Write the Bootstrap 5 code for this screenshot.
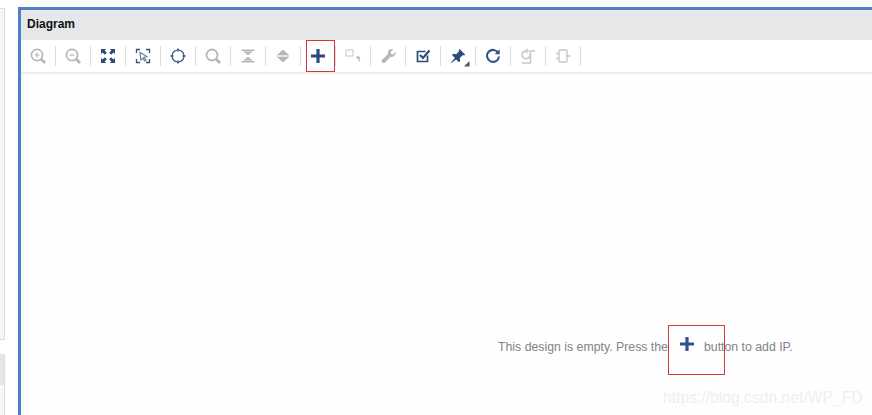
<!DOCTYPE html>
<html lang="en">
<head>
<meta charset="utf-8">
<title>Diagram</title>
<link rel="stylesheet" href="https://cdn.jsdelivr.net/npm/bootstrap@5.3.0/dist/css/bootstrap.min.css">
<style>
html,body{height:415px;overflow:hidden;background:#fff}
body{font-family:"Liberation Sans",Arial,sans-serif}
.shell{height:415px;padding-top:7px}
.side{width:5px;margin-right:13px;padding-top:1px}
.side-a{height:332px;background:#f5f5f5;border:1px solid #dcdcdc;border-left:0}
.side-b{height:61px;margin-top:14px;border-right:1px solid #dcdcdc;background:#f7f7f7}
.side-b::before{content:"";display:block;height:31px;background:#e6e6e6}
.pane{border:3px solid #4f7fc4;border-bottom:0;border-right:0;min-width:0}
.pane-head{height:30px;background:#e6e7e8;padding-left:6px;font-size:12px;font-weight:700;color:#111;line-height:28px}
.tools{height:32px;border-bottom:2px solid #ececec;box-sizing:content-box;background:#fff}
.tool{width:34px;height:32px;flex:none}
.tool svg{width:20px;height:20px;display:block;overflow:visible}
.vr-line{width:1px;height:20px;background:#dcdcdc;flex:none}
.canvas{background:#fefefe}
.hint{position:absolute;left:498px;top:340px;font-size:12.3px;line-height:15px;color:#85818a;white-space:nowrap}
.hint-gap{display:inline-block;width:36px}
.hint-plus{position:absolute;left:677px;top:334px;width:20px;height:20px}
.mark-a{position:absolute;left:306px;top:40px;width:29px;height:32px;border:1px solid #d0393b}
.mark-b{position:absolute;left:668px;top:325px;width:57px;height:50px;border:1px solid #d0393b}
.wm{position:absolute;left:663px;top:388px;font-size:15.7px;line-height:20px;color:#f0eef0;white-space:nowrap}
</style>
</head>
<body>
<div class="shell d-flex">
  <div class="side flex-shrink-0"><div class="side-a"></div><div class="side-b"></div></div>
  <div class="pane flex-grow-1 d-flex flex-column">
    <div class="pane-head">Diagram</div>
    <div class="tools d-flex align-items-center">
      <div class="tool d-flex align-items-center justify-content-center"><svg viewBox="0 0 20 20" fill="none" stroke="#b4b6b8" stroke-width="1.6"><circle cx="9" cy="9" r="5.6"/><path d="M13 13l4 4" stroke-width="2.6"/><path d="M6.5 9h5M9 6.5v5" stroke-width="1.2"/></svg></div><div class="vr-line"></div>
      <div class="tool d-flex align-items-center justify-content-center"><svg viewBox="0 0 20 20" fill="none" stroke="#b4b6b8" stroke-width="1.6"><circle cx="9" cy="9" r="5.6"/><path d="M13 13l4 4" stroke-width="2.6"/><path d="M6.5 9h5" stroke-width="1.2"/></svg></div><div class="vr-line"></div>
      <div class="tool d-flex align-items-center justify-content-center"><svg viewBox="0 0 20 20" fill="#2f4a78"><path d="M3 3h5.2L6.6 4.6 8.8 6.8 6.8 8.8 4.6 6.6 3 8.2zM17 3v5.2L15.4 6.6 13.2 8.8 11.2 6.8 13.4 4.6 11.8 3zM3 17v-5.2L4.6 13.4 6.8 11.2 8.8 13.2 6.6 15.4 8.2 17zM17 17h-5.2L13.4 15.4 11.2 13.2 13.2 11.2 15.4 13.4 17 11.8z"/></svg></div><div class="vr-line"></div>
      <div class="tool d-flex align-items-center justify-content-center"><svg viewBox="0 0 20 20" fill="none" stroke="#3a5280" stroke-width="1.3"><path d="M3.500 7V3.500H7M13 3.500h3.500V7M3.500 13v3.500H7M13 16.500h3.500V13"/><path d="M7 6.500l7 4-3 .8 2 3-1.300.8-1.800-3-2 2z" fill="#fff" stroke="#6c7a93" stroke-width="1.100"/></svg></div><div class="vr-line"></div>
      <div class="tool d-flex align-items-center justify-content-center"><svg viewBox="0 0 20 20" fill="none" stroke="#3a5280" stroke-width="1.200"><circle cx="10" cy="10" r="6"/><path d="M10 2.500v3M10 14.500v3M2.500 10h3M14.500 10h3" stroke-width="1.500"/></svg></div><div class="vr-line"></div>
      <div class="tool d-flex align-items-center justify-content-center"><svg viewBox="0 0 20 20" fill="none" stroke="#b4b6b8" stroke-width="1.800"><circle cx="9" cy="9" r="5.500"/><path d="M13 13l4 4" stroke-width="2.600"/></svg></div><div class="vr-line"></div>
      <div class="tool d-flex align-items-center justify-content-center"><svg viewBox="0 0 20 20" fill="#b4b6b8"><path d="M3.500 3.500h13v1.500h-13zM3.500 15h13v1.500h-13zM10 9.300l-5-3.800h10zM10 10.700l5 3.800H5z"/></svg></div><div class="vr-line"></div>
      <div class="tool d-flex align-items-center justify-content-center"><svg viewBox="0 0 20 20" fill="#b4b6b8"><path d="M4 9h12L10 3.500zM4 11h12l-6 5.500z"/><path d="M3.500 9.300h13v1.400h-13z" fill="#d8d8d8"/></svg></div><div class="vr-line"></div>
      <div class="tool d-flex align-items-center justify-content-center"><svg viewBox="0 0 20 20" fill="#2e4a7d"><path d="M8.400 3h3.200v5.400H17v3.200h-5.400V17H8.400v-5.400H3V8.400h5.400z"/></svg></div><div class="vr-line"></div>
      <div class="tool d-flex align-items-center justify-content-center"><svg viewBox="0 0 20 20" fill="none" stroke="#cfd1d3" stroke-width="1.200"><rect x="3" y="4" width="7" height="6" fill="#fff"/><path d="M13.500 10l4 1-1.200 1.200 1 3-1 .3-1-3-1.300 1z" fill="#b0b2b4" stroke="none"/></svg></div><div class="vr-line"></div>
      <div class="tool d-flex align-items-center justify-content-center"><svg viewBox="0 0 20 20" fill="#b4b6b8"><path d="M17.500 5.500c.5 2-.3 4-2 5-1 .5-2.100.6-3 .3L7 16.500c-.8.800-2 .8-2.800 0s-.8-2 0-2.800l5.700-5.500c-.3-1-.2-2 .3-3 1-1.700 3-2.500 5-2l-2.700 2.700.5 2.200 2.200.5z"/></svg></div><div class="vr-line"></div>
      <div class="tool d-flex align-items-center justify-content-center"><svg viewBox="0 0 20 20" fill="none" stroke="#2f4a78" stroke-width="1.700"><path d="M14.500 9.500v6h-10v-10h8"/><path d="M7 9l3 3 6.500-7.500" stroke-width="2.200"/></svg></div><div class="vr-line"></div>
      <div class="tool d-flex align-items-center justify-content-center"><svg viewBox="0 0 20 20" fill="#2d4a7e"><path d="M11.500 3l5.800 5.800-1.300.8-1-.6-3.200 3 .4 3-1.300 1.300-2.800-2.900L3.500 17l-.5-.5 3.900-4.600-2.900-2.800 1.300-1.300 3 .4 3-3.200-.6-1z"/><path d="M21.500 20.500h-5.500l5.500-5.500z" fill="#555"/></svg></div><div class="vr-line"></div>
      <div class="tool d-flex align-items-center justify-content-center"><svg viewBox="0 0 20 20" fill="none" stroke="#34508a" stroke-width="2.100"><path d="M15.300 7A6 6 0 1 0 16 10.500"/><path d="M16.700 3.200v5h-5z" fill="#34508a" stroke="none"/></svg></div><div class="vr-line"></div>
      <div class="tool d-flex align-items-center justify-content-center"><svg viewBox="0 0 20 20" fill="none" stroke="#c6c8ca" stroke-width="1.500"><path d="M9.500 5A4 4 0 1 0 12 8"/><path d="M8 3l2.500 2-2.500 2" stroke-width="1.200"/><path d="M4 17h8.500V5H17"/></svg></div><div class="vr-line"></div>
      <div class="tool d-flex align-items-center justify-content-center"><svg viewBox="0 0 20 20" fill="none" stroke="#c6c8ca" stroke-width="1.400"><rect x="6" y="4" width="8" height="12" rx="1"/><path d="M3 7.500H6M3 12.500H6M14 10h3.500"/></svg></div><div class="vr-line"></div>
    </div>
    <div class="canvas flex-grow-1"></div>
  </div>
</div>
<div class="hint">This design is empty. Press the<span class="hint-gap"></span>button to add IP.</div>
<svg class="hint-plus" viewBox="0 0 20 20" fill="#34508a"><path d="M8.400 3h3.200v5.400H17v3.200h-5.400V17H8.400v-5.400H3V8.400h5.400z"/></svg>
<div class="mark-a"></div>
<div class="mark-b"></div>
<div class="wm">https://blog.csdn.net/WP_FD</div>
<script src="https://cdn.jsdelivr.net/npm/bootstrap@5.3.0/dist/js/bootstrap.bundle.min.js"></script>
</body>
</html>
